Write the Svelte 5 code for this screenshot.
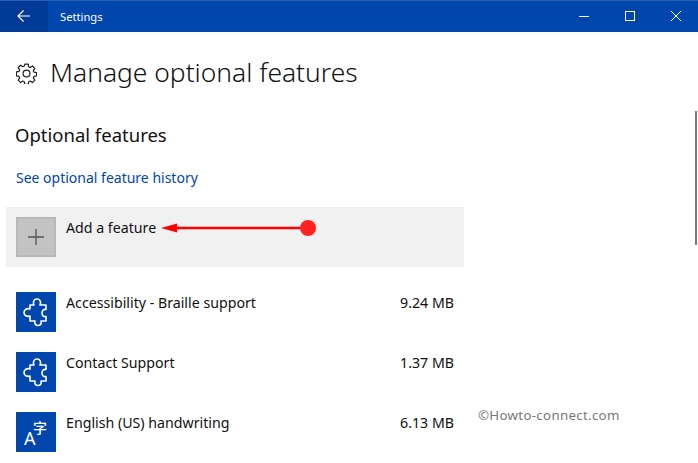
<script>
  const features = [
    { name: 'Accessibility - Braille support', size: '9.24 MB', icon: 'puzzle' },
    { name: 'Contact Support', size: '1.37 MB', icon: 'puzzle' },
    { name: 'English (US) handwriting', size: '6.13 MB', icon: 'lang' }
  ];
</script>

<div class="window">
  <header class="titlebar">
    <button class="back" aria-label="Back">
      <svg width="16" height="14" viewBox="0 0 16 14" fill="none" stroke="#fff" stroke-width="1.2">
        <path d="M2 7h12M7.500 1.500 2 7l5.500 5.500" />
      </svg>
    </button>
    <span class="app-name">Settings</span>
    <div class="controls">
      <svg width="12" height="12" viewBox="0 0 12 12" stroke="#fff" fill="none"><path d="M1 6.500h10" /></svg>
      <svg width="12" height="12" viewBox="0 0 12 12" stroke="#fff" fill="none"><rect x="1.500" y="1.500" width="9" height="9" /></svg>
      <svg width="12" height="12" viewBox="0 0 12 12" stroke="#fff" fill="none"><path d="M1 1l10 10M11 1 1 11" /></svg>
    </div>
  </header>

  <main class="content">
    <div class="page-head">
      <svg class="gear" width="21" height="21" viewBox="0 0 22 22" fill="none" stroke="#222" stroke-width="1.3" stroke-linejoin="round">
        <circle cx="11" cy="11" r="3.600" />
        <path d="M9.200 1.200h3.600l.5 2.800 1.600.7 2.300-1.600 2.500 2.500-1.600 2.300.7 1.600 2.800.5v3.600l-2.800.5-.7 1.600 1.600 2.300-2.500 2.500-2.300-1.600-1.600.7-.5 2.800H9.200l-.5-2.800-1.600-.7-2.300 1.600-2.500-2.500 1.600-2.300-.7-1.600-2.800-.5V9.200l2.800-.5.7-1.600-1.600-2.300 2.500-2.500 2.300 1.600 1.600-.7z" />
      </svg>
      <h1>Manage optional features</h1>
    </div>

    <h2>Optional features</h2>
    <a class="history" href="#history">See optional feature history</a>

    <div class="list">
      <div class="row add">
        <div class="tile plus">
          <svg width="16" height="16" viewBox="0 0 16 16" stroke="#555" stroke-width="1.300"><path d="M8 0v16M0 8h16" /></svg>
        </div>
        <span class="name">Add a feature</span>
      </div>

      {#each features as item}
        <div class="row">
          <div class="tile">
            {#if item.icon === 'puzzle'}
              <svg width="40" height="40" viewBox="0 0 40 40" fill="none" stroke="#fff" stroke-width="1.600" stroke-linejoin="round">
                <path d="M14 13h4c-1.500-3 0-6 3-6s4.500 3 3 6h6v4.500c-2.500-.5-4 1-4 3.500s1.500 4 4 3.500V29h-5c1 3-1 4.500-3 4.500s-4-1.500-3-4.500h-5v-5c-3 1-6-.5-6-3.500s3-4.500 6-3.500z" />
              </svg>
            {:else}
              <span class="lang-a">A</span><span class="lang-zi">字</span>
            {/if}
          </div>
          <span class="name">{item.name}</span>
          <span class="size">{item.size}</span>
        </div>
      {/each}
    </div>
  </main>

  <svg class="arrow" width="156" height="20" viewBox="0 0 156 20">
    <path d="M0 10l16-4.500v9z" fill="#f00" />
    <path d="M14 10h134" stroke="#f00" stroke-width="2.500" />
    <circle cx="147" cy="10" r="8" fill="#ff2222" />
  </svg>
  <span class="watermark">©Howto-connect.com</span>
  <div class="scrollbar"></div>
</div>

<style>
:global(body) { margin: 0; background: #fff; }
.window { position: relative; width: 698px; height: 463px; overflow: hidden; font-family: "Noto Sans", "Open Sans", sans-serif; color: #111; }
.titlebar { display: flex; align-items: center; height: 32px; background: #0046ad; box-shadow: inset 0 1px 0 #2a5fb4; color: #fff; }
.back { display: flex; align-items: center; justify-content: center; width: 48px; height: 32px; padding: 0; border: 0; background: #003a96; box-shadow: inset 0 1px 0 #2a5fb4; }
.app-name { margin-left: 12px; font-size: 11.200px; }
.controls { display: flex; align-items: center; gap: 34px; margin-left: auto; margin-right: 16px; }
.content { padding: 0 0 0 6px; }
.page-head { display: flex; align-items: center; gap: 13px; height: 82px; margin-left: 10px; }
.gear { flex: none; }
h1 { margin: -3px 0 0; font-size: 26.400px; font-weight: 300; color: #111; }
h2 { margin: 8px 0 0 9px; font-size: 18.500px; font-weight: 400; line-height: 26px; }
.history { display: block; margin: 20px 0 0 10px; font-size: 14px; line-height: 20px; color: #0046ad; text-decoration: none; }
.list { width: 458px; margin-top: 19px; }
.row { display: flex; align-items: flex-start; height: 60px; padding: 10px 10px 0; box-sizing: border-box; }
.add { background: #f1f1f1; margin-bottom: 15px; }
.tile { position: relative; display: flex; align-items: center; justify-content: center; flex: none; width: 40px; height: 40px; background: #0046ad; }
.plus { background: #c3c3c3; box-shadow: inset 0 0 0 2px #b9b9b9; }
.name { margin-left: 10px; font-size: 14.200px; line-height: 20px; transform: translateY(1px); }
.size { margin-left: auto; font-size: 14.200px; line-height: 20px; transform: translateY(1px); }
.lang-a { position: absolute; left: 8px; top: 16px; color: #fff; font-size: 18px; line-height: 20px; }
.lang-zi { position: absolute; left: 17px; top: 7px; color: #fff; font-family: "Noto Sans CJK SC", sans-serif; font-size: 14px; font-weight: 500; line-height: 16px; }
.arrow { position: absolute; left: 161px; top: 218px; }
.watermark { position: absolute; left: 478px; top: 406px; font-size: 13.300px; letter-spacing: .3px; color: #777; }
.scrollbar { position: absolute; left: 695px; top: 111px; width: 2px; height: 134px; background: #7a7a7a; }
</style>
